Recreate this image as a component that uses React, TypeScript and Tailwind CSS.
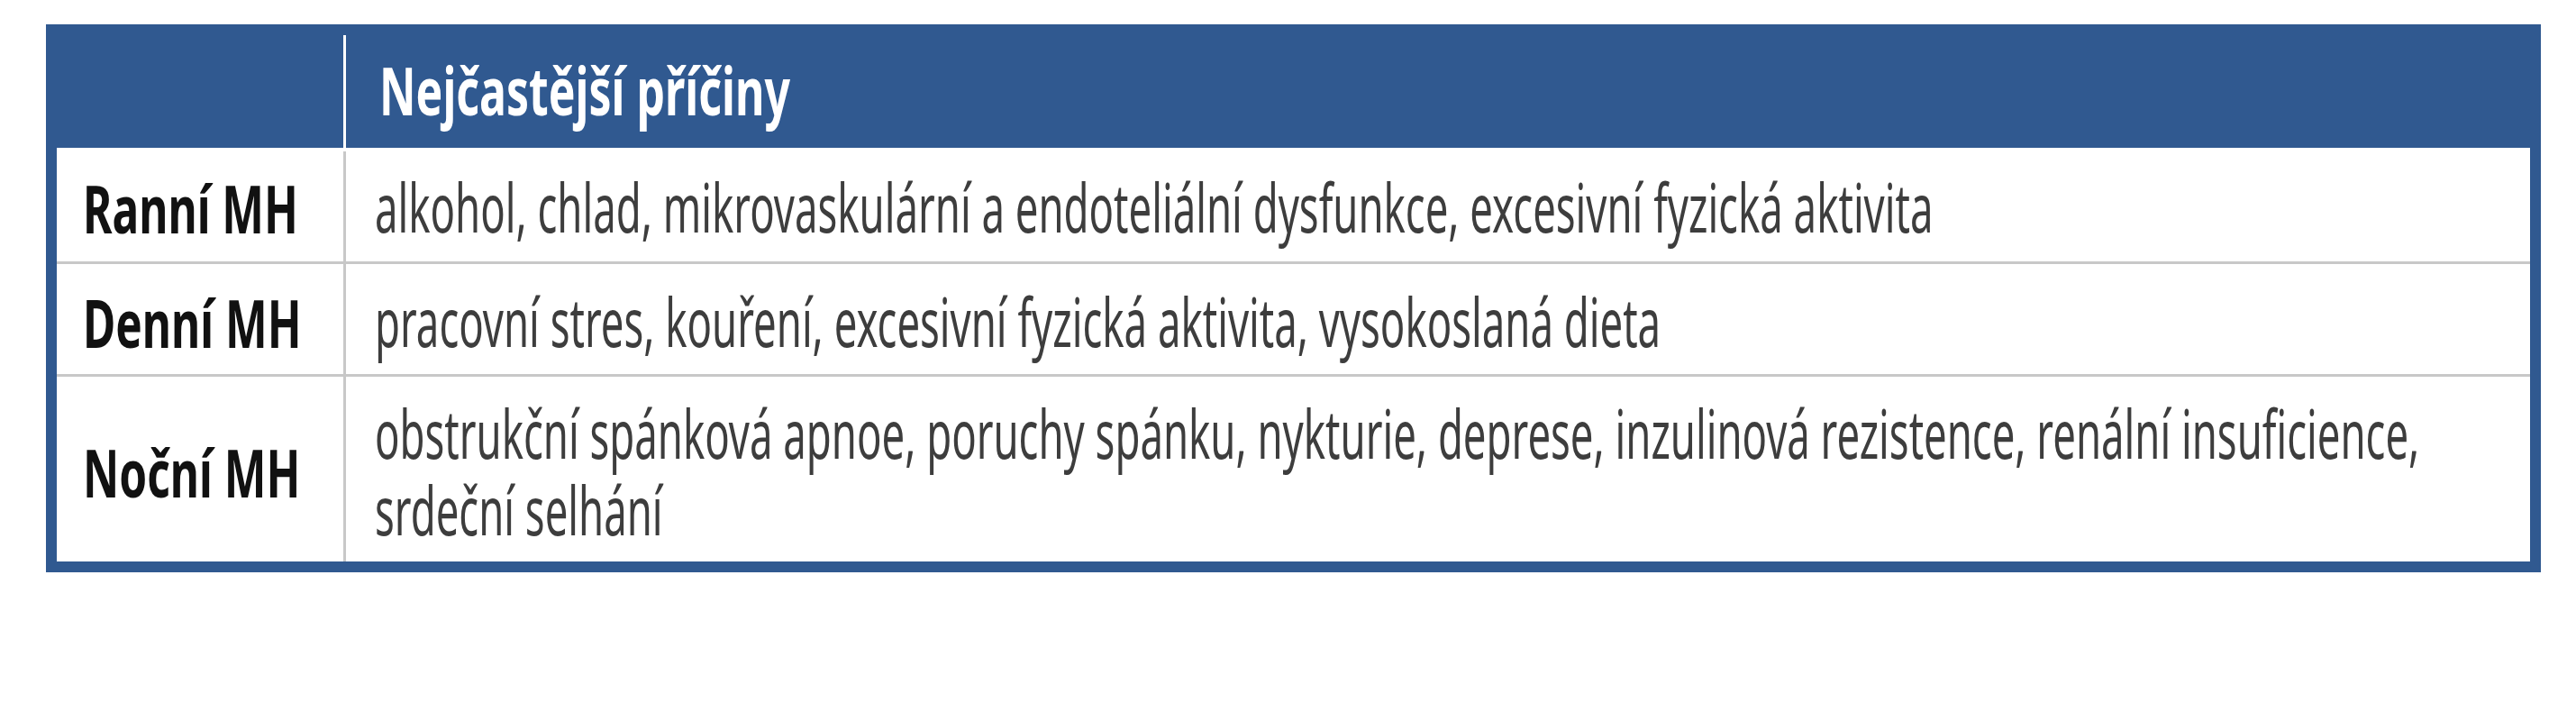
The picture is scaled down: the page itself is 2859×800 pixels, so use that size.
const rows = [
  {
    label: "Ranní MH",
    text: "alkohol, chlad, mikrovaskulární a endoteliální dysfunkce, excesivní fyzická aktivita",
    h: "h-[126px]",
  },
  {
    label: "Denní MH",
    text: "pracovní stres, kouření, excesivní fyzická aktivita, vysokoslaná dieta",
    h: "h-[122px]",
  },
  {
    label: "Noční MH",
    text: "obstrukční spánková apnoe, poruchy spánku, nykturie, deprese, inzulinová rezistence, renální insuficience,\nsrdeční selhání",
    h: "h-[205px]",
  },
];

// the source font is a tall condensed face: a smaller Noto Sans is stretched up and squeezed in
export default function App() {
  return (
    <div className="min-h-[800px] overflow-hidden bg-white pl-[51px] pt-[27px] font-['Noto_Sans',sans-serif]">
      <div className="w-[2769px] bg-[#305990] px-[12px] pb-[12px]">
        {/* header */}
        <div className="flex h-[137px]">
          <div className="w-[318px]" />
          <div className="mt-[12px] w-[3px] bg-white" />
          <div className="flex min-w-0 flex-1 items-center pl-[37px] pt-[6px] text-[56px] leading-none font-bold text-white">
            <span className="inline-block origin-left scale-x-[0.892] scale-y-[1.321] whitespace-nowrap">
              Nejčastější příčiny
            </span>
          </div>
        </div>

        {/* body */}
        <div className="bg-white">
          {rows.map((r, i) => (
            <div key={r.label}>
              {i > 0 && <div className="h-[3px] bg-[#c8c8c8]" />}
              <div className={`flex ${r.h}`}>
                <div className="flex w-[318px] items-center pl-[29px] pt-[5px] text-[56px] leading-none font-bold text-[#111]">
                  <span className="inline-block origin-left scale-x-[0.885] scale-y-[1.321] whitespace-nowrap">
                    {r.label}
                  </span>
                </div>
                <div className={`w-[3px] bg-[#c8c8c8] ${i === 0 ? "mt-[4px]" : ""}`} />
                <div className="flex min-w-0 flex-1 items-center pl-[32px] pt-[5px] text-[48px] leading-[55px] text-[#3d3d3d]">
                  <p className="origin-left scale-x-[0.948] scale-y-[1.542] whitespace-pre">{r.text}</p>
                </div>
              </div>
            </div>
          ))}
        </div>
      </div>
    </div>
  );
}
